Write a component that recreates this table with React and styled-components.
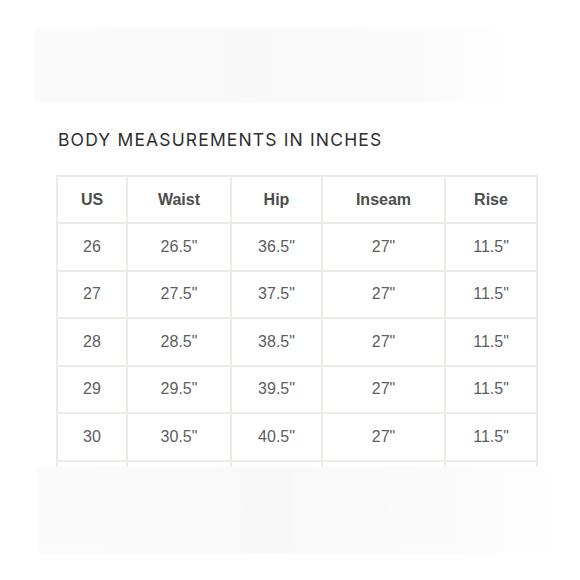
import React from 'react'
import styled, { createGlobalStyle } from 'styled-components'

const GlobalStyle = createGlobalStyle`
  body {
    margin: 0;
    background: #ffffff;
    font-family: "Liberation Sans", Arial, sans-serif;
  }
`

const Page = styled.div`
  width: 580px;
  height: 580px;
  overflow: hidden;
  display: flex;
  flex-direction: column;
`

const FadeBand = styled.div`
  margin-top: ${p => p.top}px;
  margin-left: ${p => p.left}px;
  width: ${p => p.width}px;
  height: ${p => p.height}px;
  background: linear-gradient(90deg, #fbfafa 0%, #f9f8f8 45%, #fbfafa 80%, rgba(255,255,255,0) 100%);
  filter: blur(1.5px);
`

const Title = styled.h2`
  margin: 29px 0 0 58px;
  font-family: Inter, "Liberation Sans", sans-serif;
  font-weight: 400;
  font-size: 17.5px;
  line-height: 16px;
  letter-spacing: 1.15px;
  color: #2e2e2e;
`

const TableClip = styled.div`
  margin: 27px 0 0 56px;
  height: 292px;
  overflow: hidden;
`

const Table = styled.table`
  border-collapse: collapse;
  table-layout: fixed;
`

const Cell = styled.td`
  width: ${p => p.w}px;
  height: ${p => (p.head ? 45 : 45.5)}px;
  padding: 0;
  border: 2px solid #eeebe6;
  text-align: center;
  vertical-align: middle;
  font-size: 16px;
  font-weight: ${p => (p.head ? 700 : 400)};
  color: ${p => (p.head ? '#4d4d4d' : '#5e5e5e')};
`

const widths = [68, 102, 89, 121, 90]
const head = ['US', 'Waist', 'Hip', 'Inseam', 'Rise']
const rows = [
  ['26', '26.5"', '36.5"', '27"', '11.5"'],
  ['27', '27.5"', '37.5"', '27"', '11.5"'],
  ['28', '28.5"', '38.5"', '27"', '11.5"'],
  ['29', '29.5"', '39.5"', '27"', '11.5"'],
  ['30', '30.5"', '40.5"', '27"', '11.5"'],
  ['31', '', '', '', ''],
]

export default function App() {
  return (
    <Page>
      <GlobalStyle />
      <FadeBand top={28} left={35} width={480} height={75} />
      <Title>BODY MEASUREMENTS IN INCHES</Title>
      <TableClip>
        <Table>
          <thead>
            <tr>
              {head.map((h, i) => (
                <Cell as="th" head w={widths[i]} key={h}>{h}</Cell>
              ))}
            </tr>
          </thead>
          <tbody>
            {rows.map(r => (
              <tr key={r[0]}>
                {r.map((v, i) => (
                  <Cell w={widths[i]} key={i}>{r[0] === '31' ? '' : v}</Cell>
                ))}
              </tr>
            ))}
          </tbody>
        </Table>
      </TableClip>
      <FadeBand top={0} left={37} width={523} height={86} />
    </Page>
  )
}
